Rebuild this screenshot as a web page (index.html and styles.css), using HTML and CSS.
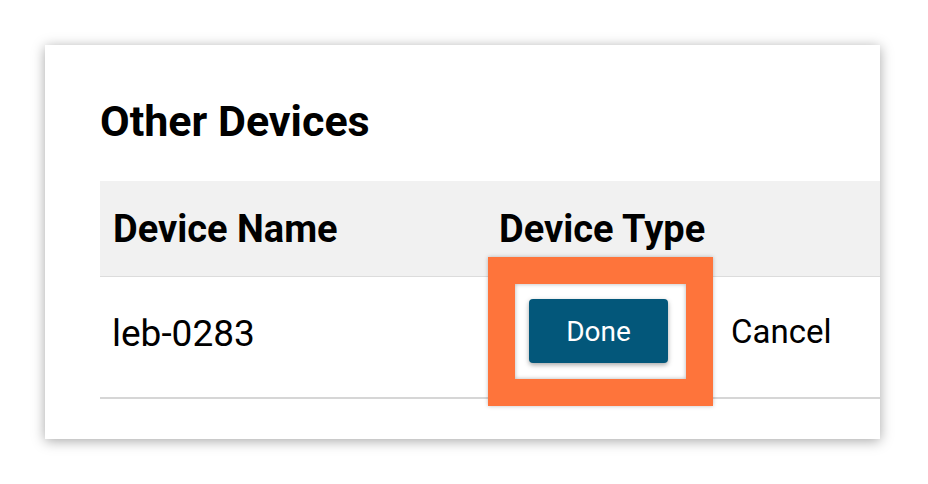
FILE: index.html
```html
<!DOCTYPE html>
<html lang="en">
<head>
    <meta charset="UTF-8">
    <meta name="viewport" content="width=device-width, initial-scale=1.0">
    <title>Other Devices</title>
    <link rel="stylesheet" href="styles.css">
</head>
<body>
    <div class="card">
        <h2>Other Devices</h2>
        <div class="devices">
            <div class="row head">
                <div class="cell name">Device Name</div>
                <div class="cell type">Device Type</div>
            </div>
            <div class="row">
                <div class="cell name">leb-0283</div>
                <div class="cell actions">
                    <button class="btn-done">Done</button>
                    <button class="btn-cancel">Cancel</button>
                </div>
            </div>
        </div>

        <!-- annotation box around the Done button -->
        <div class="highlight"></div>
    </div>
</body>
</html>
```

FILE: styles.css
```css
body {
    font-family: Roboto, "Liberation Sans", Arial, sans-serif;
    margin: 0;
    padding: 45px 48px 45px 45px;
    background: #fff;
    color: #000;
}

.card {
    position: relative;
    height: 394px;
    padding: 0 0 0 55px;
    box-sizing: border-box;
    background: #fff;
    box-shadow: 0 2px 12px rgba(0, 0, 0, 0.35);
    overflow: hidden;
}

h2 {
    margin: 0;
    padding-top: 51px;
    font-size: 43px;
    line-height: 50px;
    font-weight: 700;
}

.devices {
    margin-top: 35px;
}

.row {
    display: grid;
    grid-template-columns: 386px 1fr;
    align-items: center;
    height: 120px;
    border-bottom: 2px solid #d6d6d6;
}

.row.head {
    height: 95px;
    background: #f1f1f1;
    font-weight: 700;
    font-size: 38px;
    border-bottom: 1px solid #dcdcdc;
}

.cell {
    padding: 0 13px;
}

.row:not(.head) .cell.name {
    font-size: 37px;
    padding-left: 12px;
    padding-bottom: 7px;
}

.actions {
    display: flex;
    align-items: center;
    padding-left: 43px;
    padding-bottom: 12px;
}

.btn-done {
    width: 139px;
    height: 64px;
    background: #03577a;
    color: #fff;
    border: none;
    border-radius: 4px;
    font-family: inherit;
    font-size: 28px;
    box-shadow: 0 2px 5px rgba(0, 0, 0, 0.35);
}

.btn-cancel {
    margin-left: 51px;
    padding: 0 12px;
    background: none;
    border: none;
    font-family: inherit;
    font-size: 33px;
    color: #000;
}

.highlight {
    position: absolute;
    left: 443px;
    top: 212px;
    width: 225px;
    height: 149px;
    box-sizing: border-box;
    border: 27px solid #fe743b;
    box-shadow: 0 0 4px rgba(0, 0, 0, 0.25), inset 0 0 4px rgba(0, 0, 0, 0.3);
}
```
